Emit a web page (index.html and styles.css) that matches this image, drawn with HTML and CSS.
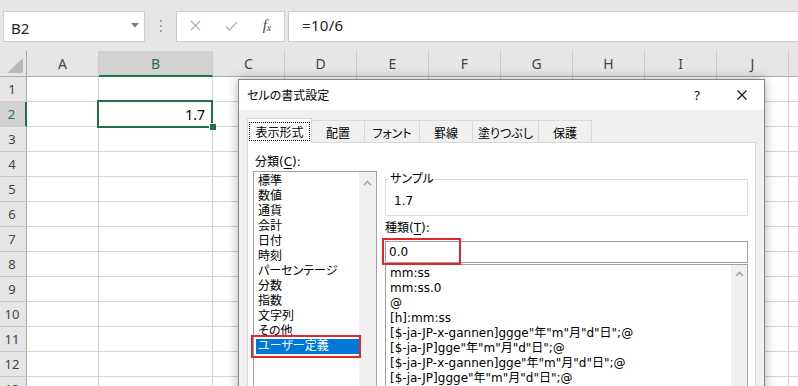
FILE: index.html
```html
<!DOCTYPE html>
<html lang="ja">
<head>
<meta charset="utf-8">
<title>セルの書式設定</title>
<link rel="stylesheet" href="styles.css">
</head>
<body>
<div class="app">
  <div class="fbar">
    <div class="namebox"><span class="nb-text">B2</span><svg class="nb-arrow" width="8" height="5" viewBox="0 0 8 5"><path d="M0 0H8L4 4.5Z" fill="#7a7a7a"/></svg></div>
    <div class="grip"><i></i><i></i><i></i></div>
    <div class="fbtns">
      <svg width="11" height="11" viewBox="0 0 11 11"><path d="M1 1L10 10M10 1L1 10" stroke="#b4b4b4" stroke-width="1.3" fill="none"/></svg>
      <svg width="13" height="10" viewBox="0 0 13 10"><path d="M1 5.5L4.5 9L12 1" stroke="#b4b4b4" stroke-width="1.4" fill="none"/></svg>
      <span class="fx"><i>f</i><sub>x</sub></span>
    </div>
    <div class="finput">=10/6</div>
  </div>

  <div class="sheet">
    <div class="h corner"><svg width="16" height="15" viewBox="0 0 16 15"><path d="M16 0V15H0Z" fill="#b9b9b9"/></svg></div>
    <div class="h">A</div><div class="h hs">B</div><div class="h">C</div><div class="h">D</div><div class="h">E</div><div class="h">F</div><div class="h">G</div><div class="h">H</div><div class="h">I</div><div class="h">J</div><div class="h"></div>

    <div class="r">1</div><div class="c"></div><div class="c"></div><div class="c"></div><div class="c"></div><div class="c"></div><div class="c"></div><div class="c"></div><div class="c"></div><div class="c"></div><div class="c"></div><div class="c"></div>
    <div class="r rs">2</div><div class="c"></div><div class="c val">1.7</div><div class="c"></div><div class="c"></div><div class="c"></div><div class="c"></div><div class="c"></div><div class="c"></div><div class="c"></div><div class="c"></div><div class="c"></div>
    <div class="r">3</div><div class="c"></div><div class="c"></div><div class="c"></div><div class="c"></div><div class="c"></div><div class="c"></div><div class="c"></div><div class="c"></div><div class="c"></div><div class="c"></div><div class="c"></div>
    <div class="r">4</div><div class="c"></div><div class="c"></div><div class="c"></div><div class="c"></div><div class="c"></div><div class="c"></div><div class="c"></div><div class="c"></div><div class="c"></div><div class="c"></div><div class="c"></div>
    <div class="r">5</div><div class="c"></div><div class="c"></div><div class="c"></div><div class="c"></div><div class="c"></div><div class="c"></div><div class="c"></div><div class="c"></div><div class="c"></div><div class="c"></div><div class="c"></div>
    <div class="r">6</div><div class="c"></div><div class="c"></div><div class="c"></div><div class="c"></div><div class="c"></div><div class="c"></div><div class="c"></div><div class="c"></div><div class="c"></div><div class="c"></div><div class="c"></div>
    <div class="r">7</div><div class="c"></div><div class="c"></div><div class="c"></div><div class="c"></div><div class="c"></div><div class="c"></div><div class="c"></div><div class="c"></div><div class="c"></div><div class="c"></div><div class="c"></div>
    <div class="r">8</div><div class="c"></div><div class="c"></div><div class="c"></div><div class="c"></div><div class="c"></div><div class="c"></div><div class="c"></div><div class="c"></div><div class="c"></div><div class="c"></div><div class="c"></div>
    <div class="r">9</div><div class="c"></div><div class="c"></div><div class="c"></div><div class="c"></div><div class="c"></div><div class="c"></div><div class="c"></div><div class="c"></div><div class="c"></div><div class="c"></div><div class="c"></div>
    <div class="r">10</div><div class="c"></div><div class="c"></div><div class="c"></div><div class="c"></div><div class="c"></div><div class="c"></div><div class="c"></div><div class="c"></div><div class="c"></div><div class="c"></div><div class="c"></div>
    <div class="r">11</div><div class="c"></div><div class="c"></div><div class="c"></div><div class="c"></div><div class="c"></div><div class="c"></div><div class="c"></div><div class="c"></div><div class="c"></div><div class="c"></div><div class="c"></div>
    <div class="r">12</div><div class="c"></div><div class="c"></div><div class="c"></div><div class="c"></div><div class="c"></div><div class="c"></div><div class="c"></div><div class="c"></div><div class="c"></div><div class="c"></div><div class="c"></div>
    <div class="r">13</div><div class="c"></div><div class="c"></div><div class="c"></div><div class="c"></div><div class="c"></div><div class="c"></div><div class="c"></div><div class="c"></div><div class="c"></div><div class="c"></div><div class="c"></div>

    <div class="sel"><div class="handle"></div></div>
  </div>

  <div class="dialog">
    <div class="dlg-title">
      <span class="dlg-name">セルの書式設定</span>
      <span class="help">?</span>
      <svg class="close" width="10" height="10" viewBox="0 0 10 10"><path d="M0.5 0.5L9.5 9.5M9.5 0.5L0.5 9.5" stroke="#111" stroke-width="1.1" fill="none"/></svg>
    </div>
    <div class="dlg-body">
      <div class="tabs">
        <div class="tab active t1"><span class="focus">表示形式</span></div>
        <div class="tab t2">配置</div>
        <div class="tab t3">フォント</div>
        <div class="tab t2">罫線</div>
        <div class="tab t5">塗りつぶし</div>
        <div class="tab t2">保護</div>
      </div>
      <div class="panel">
        <div class="col-left">
          <div class="lbl lbl-cat">分類(<u>C</u>):</div>
          <div class="listbox cat">
            <ul class="items">
              <li>標準</li>
              <li>数値</li>
              <li>通貨</li>
              <li>会計</li>
              <li>日付</li>
              <li>時刻</li>
              <li>パーセンテージ</li>
              <li>分数</li>
              <li>指数</li>
              <li>文字列</li>
              <li>その他</li>
              <li class="selected">ユーザー定義</li>
            </ul>
            <div class="vs vs-cat"><svg width="9" height="6" viewBox="0 0 9 6"><path d="M1 5L4.5 1.5L8 5" stroke="#a6a6a6" stroke-width="1.6" fill="none"/></svg></div>
          </div>
        </div>
        <div class="col-right">
          <fieldset class="sample">
            <legend>サンプル</legend>
            <div class="sample-val">1.7</div>
          </fieldset>
          <div class="lbl lbl-type">種類(<u>T</u>):</div>
          <div class="textbox">0.0</div>
          <div class="listbox fmt">
            <ul class="items">
              <li>mm:ss</li>
              <li>mm:ss.0</li>
              <li>@</li>
              <li>[h]:mm:ss</li>
              <li>[$-ja-JP-x-gannen]ggge"年"m"月"d"日";@</li>
              <li>[$-ja-JP]gge"年"m"月"d"日";@</li>
              <li>[$-ja-JP-x-gannen]gge"年"m"月"d"日";@</li>
              <li>[$-ja-JP]ggge"年"m"月"d"日";@</li>
            </ul>
            <div class="vs vs-fmt"><svg width="9" height="6" viewBox="0 0 9 6"><path d="M1 5L4.5 1.5L8 5" stroke="#a6a6a6" stroke-width="1.6" fill="none"/></svg></div>
          </div>
        </div>
      </div>
    </div>
    <div class="mark mark-type"></div>
    <div class="mark mark-cat"></div>
  </div>
</div>
</body>
</html>
```

FILE: styles.css
```css
* { box-sizing: border-box; }
html, body { margin: 0; padding: 0; }
body {
  width: 798px;
  height: 386px;
  overflow: hidden;
  background: #fff;
  font-family: "Noto Sans", "Noto Sans CJK JP", sans-serif;
}
.app {
  position: relative;
  width: 798px;
  height: 386px;
  overflow: hidden;
  background: #e6e6e6;
}

/* formula bar */
.fbar {
  display: flex;
  align-items: flex-start;
  height: 51px;
  padding: 11px 0 0 3px;
}
.namebox {
  width: 142px;
  height: 31px;
  background: #fff;
  border: 1px solid #cdcdcd;
  display: flex;
  align-items: center;
  padding: 3px 5px 0 7px;
  font-size: 15px;
  color: #262626;
}
.nb-arrow { margin-left: auto; margin-top: -5px; }
.grip {
  width: 31px;
  height: 31px;
  display: flex;
  flex-direction: column;
  align-items: center;
  justify-content: center;
  gap: 3px;
  padding-bottom: 2px;
}
.grip i { display: block; width: 2px; height: 2px; background: #a9a9a9; }
.fbtns {
  width: 109px;
  height: 31px;
  background: #fff;
  border: 1px solid #cdcdcd;
  display: grid;
  grid-template-columns: 36px 36px 36px;
  align-items: center;
  justify-items: center;
  padding-bottom: 2px;
}
.fx {
  font-family: "Liberation Serif", serif;
  font-size: 15px;
  color: #444;
  line-height: 1;
}
.fx i { font-style: italic; }
.fx sub { font-style: italic; font-size: 10px; vertical-align: -1px; }
.finput {
  flex: 1;
  height: 31px;
  margin-left: 3px;
  background: #fff;
  border: 1px solid #cdcdcd;
  border-right: none;
  padding: 0 0 3px 13px;
  display: flex;
  align-items: center;
  font-size: 15px;
  color: #222;
  letter-spacing: 0.3px;
}

/* sheet */
.sheet {
  position: relative;
  display: grid;
  grid-template-columns: 27px 72px 114px repeat(9, 72px);
  grid-template-rows: 26px;
  grid-auto-rows: 25px;
  background: #fff;
}
.h {
  background: #e6e6e6;
  border-right: 1px solid #cbcbcb;
  border-bottom: 1px solid #ababab;
  display: flex;
  align-items: center;
  justify-content: center;
  font-size: 14px;
  color: #444;
}
.corner {
  justify-content: flex-end;
  align-items: flex-end;
  padding: 0 3px 3px 0;
  border-right-color: #ababab;
}
.hs {
  background: #d2d2d2;
  color: #217346;
  border-bottom: 2px solid #217346;
}
.r {
  background: #e6e6e6;
  border-right: 1px solid #ababab;
  border-bottom: 1px solid #cbcbcb;
  display: flex;
  align-items: center;
  justify-content: center;
  font-size: 13px;
  color: #444;
  padding-right: 2px;
}
.rs {
  background: #d2d2d2;
  color: #217346;
  border-right: 2px solid #217346;
}
.c {
  border-right: 1px solid #d4d4d4;
  border-bottom: 1px solid #d4d4d4;
}
.val {
  display: flex;
  align-items: center;
  justify-content: flex-end;
  padding-right: 7px;
  font-size: 14px;
  color: #000;
}
.sel {
  position: absolute;
  left: 97px;
  top: 49px;
  width: 116px;
  height: 28px;
  border: 2px solid #217346;
}
.handle {
  position: absolute;
  left: 110px;
  top: 21px;
  width: 7px;
  height: 7px;
  background: #217346;
  border-left: 1px solid #fff;
  border-top: 1px solid #fff;
}

/* dialog */
.dialog {
  position: absolute;
  left: 238px;
  top: 79px;
  width: 527px;
  height: 340px;
  background: #f0f0f0;
  border: 1px solid #858585;
  box-shadow: 0 0 11px rgba(0, 0, 0, 0.3);
  font-family: "DejaVu Sans", "Noto Sans CJK JP", sans-serif;
  font-size: 12px;
  color: #000;
  font-feature-settings: "palt";
}
.dlg-title {
  height: 30px;
  background: #fff;
  display: flex;
  align-items: center;
  padding-left: 8px;
}
.dlg-name { padding-bottom: 1px; }
.help {
  margin-left: auto;
  font-family: "Noto Sans", sans-serif;
  font-size: 13px;
  padding-bottom: 1px;
}
.close { margin: 0 17px 0 37px; }
.dlg-body { padding: 8px 8px 0; }

.tabs {
  display: flex;
  align-items: flex-end;
  height: 24px;
}
.tab {
  height: 22px;
  border-top: 1px solid #d9d9d9;
  border-right: 1px solid #d9d9d9;
  background: #f0f0f0;
  display: flex;
  align-items: center;
  justify-content: center;
  padding-top: 1px;
}
.t1 { width: 65px; }
.t2 { width: 53px; }
.t3 { width: 55px; }
.t5 { width: 66px; }
.tab.active {
  height: 25px;
  margin-bottom: -1px;
  border-left: 1px solid #d9d9d9;
  background: #fff;
  position: relative;
  z-index: 1;
  align-items: flex-start;
  padding-top: 0;
}
.focus {
  margin-top: 3px;
  width: 61px;
  height: 19px;
  border: 1px dotted #000;
  display: flex;
  align-items: center;
  justify-content: center;
}

.panel {
  display: flex;
  gap: 8px;
  background: #fff;
  border: 1px solid #d9d9d9;
  height: 262px;
  padding: 10px 7px 0 5px;
}
.col-left { width: 124px; flex: none; }
.col-right { flex: 1; padding-top: 19px; }
.lbl { height: 18px; line-height: 18px; }
.lbl-cat { padding-left: 2px; }
.lbl u { text-underline-offset: 2px; }

.listbox {
  display: flex;
  border: 1px solid #a0a0a0;
  background: #fff;
}
.listbox.cat { height: 230px; }
.listbox.fmt { height: 130px; margin-top: 1px; }
.items {
  list-style: none;
  margin: 0;
  flex: 1;
  min-width: 0;
  overflow: hidden;
}
.cat .items { padding: 2px 0 0 2px; }
.fmt .items { padding: 1px 0 0 1px; }
.items li {
  height: 15px;
  line-height: 15px;
  padding-left: 2px;
  white-space: nowrap;
}
.fmt .items li { padding-left: 3px; }
.items li.selected { background: #0078d7; color: #fff; }
.vs {
  background: #f0f0f0;
  display: flex;
  justify-content: center;
  align-items: flex-start;
}
.vs-cat { width: 17px; padding-top: 8px; }
.vs-fmt { width: 16px; padding-top: 6px; }

.sample {
  margin: 0;
  border: 1px solid #dcdcdc;
  padding: 7px 3px 6px;
}
.sample legend {
  padding: 0 1px;
  line-height: 15px;
}
.sample-val { line-height: 15px; padding-left: 5px; }
.lbl-type { margin-top: 3px; }
.textbox {
  margin-top: 4px;
  height: 22px;
  border: 1px solid #a0a0a0;
  background: #fff;
  padding-left: 3px;
  line-height: 20px;
}

.mark {
  position: absolute;
  border: 2px solid #e3262b;
}
.mark-type { left: 143px; top: 158px; width: 79px; height: 27px; }
.mark-cat { left: 12px; top: 255px; width: 110px; height: 23px; }
```
